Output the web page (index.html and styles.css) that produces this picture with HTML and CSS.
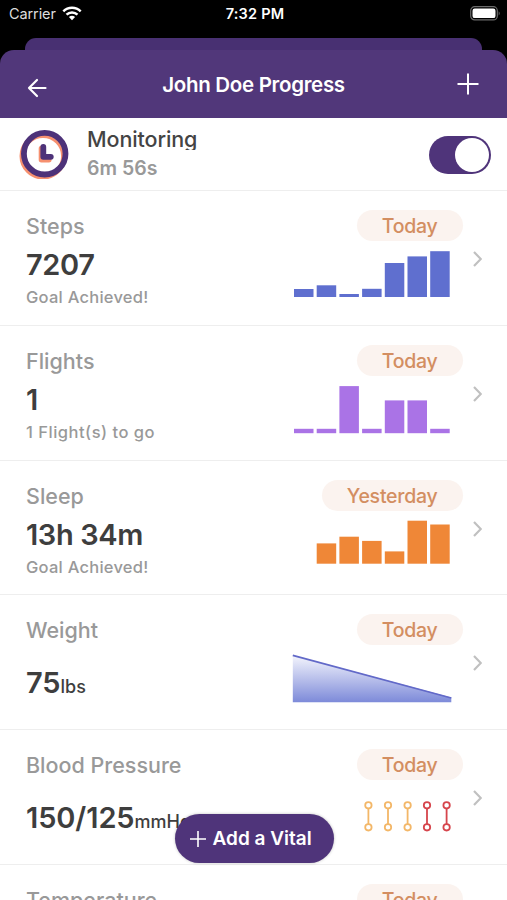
FILE: index.html
```html
<!DOCTYPE html>
<html lang="en">
<head>
    <meta charset="UTF-8">
    <meta name="viewport" content="width=device-width, initial-scale=1.0">
    <title>John Doe Progress</title>
    <link rel="stylesheet" href="styles.css">
</head>
<body>
    <div class="phone">
        <div class="status-bar">
            <div class="carrier">
                <span>Carrier</span>
                <svg width="20" height="15" viewBox="0 0 20 15">
                    <g fill="none" stroke="#fff" stroke-width="2.5">
                        <path d="M1.3 5.3a12.5 12.5 0 0 1 17.4 0"/>
                        <path d="M4.5 8.7a7.9 7.9 0 0 1 11 0"/>
                    </g>
                    <path d="M6.9 11.1a4.5 4.5 0 0 1 6.2 0L10 14.2z" fill="#fff"/>
                </svg>
            </div>
            <div class="clock">7:32 PM</div>
            <svg class="battery" width="31" height="15" viewBox="0 0 31 15">
                <rect x=".7" y=".7" width="26.6" height="13.2" rx="4" fill="none" stroke="#6b6b6b" stroke-width="1.2"/>
                <rect x="2.5" y="2.5" width="23" height="9.6" rx="2.2" fill="#fff"/>
                <path d="M28.7 5.2q2 2 0 4.4z" fill="#6b6b6b"/>
            </svg>
        </div>

        <div class="back-card"></div>

        <header class="header">
            <svg class="back" width="20" height="20" viewBox="0 0 20 20">
                <path d="M18.5 10H2M10 2L2 10l8 8" fill="none" stroke="#fff" stroke-width="2.2" stroke-linecap="round" stroke-linejoin="round"/>
            </svg>
            <h1>John Doe Progress</h1>
            <svg class="plus" width="22" height="22" viewBox="0 0 22 22">
                <path d="M11 .5v21M.5 11h21" stroke="#fff" stroke-width="2"/>
            </svg>
        </header>

        <!-- Monitoring -->
        <div class="monitoring">
            <svg class="timer-icon" width="50" height="50" viewBox="0 0 50 50">
                <g fill="none" stroke="#f6906f" stroke-width="5.4" stroke-linecap="round" stroke-linejoin="round">
                    <circle cx="24" cy="27" r="20.8"/>
                    <path d="M22.4 19.5v11.3h7.5"/>
                </g>
                <g fill="none" stroke="#4d3279" stroke-width="5.8" stroke-linecap="round" stroke-linejoin="round">
                    <circle cx="25.7" cy="24.7" r="20.8"/>
                    <path d="M24.3 18v9.8h7.5"/>
                </g>
            </svg>
            <div class="monitoring-text">
                <div class="monitoring-title">Monitoring</div>
                <div class="monitoring-time">6m 56s</div>
            </div>
            <div class="toggle"><div class="knob"></div></div>
        </div>

        <!-- Vitals -->
        <div class="vital">
            <div class="info">
                <div class="name">Steps</div>
                <div class="value">7207</div>
                <div class="goal">Goal Achieved!</div>
            </div>
            <div class="trend">
                <div class="badge">Today</div>
                <svg class="chart" width="160" height="56" viewBox="0 0 160 56" fill="#5f6fcf">
                    <rect x="2" y="39" width="19.5" height="8"/>
                    <rect x="24.7" y="35.3" width="19.5" height="11.7"/>
                    <rect x="47.4" y="44" width="19.5" height="3"/>
                    <rect x="70.1" y="38.8" width="19.5" height="8.2"/>
                    <rect x="92.8" y="13" width="19.5" height="34"/>
                    <rect x="115.5" y="6.4" width="19.5" height="40.6"/>
                    <rect x="138.2" y="1.2" width="19.5" height="45.8"/>
                </svg>
            </div>
            <svg class="chevron" width="9" height="16" viewBox="0 0 9 16"><path d="M1 1l6.8 7L1 15"/></svg>
        </div>

        <div class="vital">
            <div class="info">
                <div class="name">Flights</div>
                <div class="value">1</div>
                <div class="goal goal-wide">1 Flight(s) to go</div>
            </div>
            <div class="trend">
                <div class="badge">Today</div>
                <svg class="chart" width="160" height="56" viewBox="0 0 160 56" fill="#aa73e6">
                    <rect x="2" y="43.8" width="19.5" height="4.4"/>
                    <rect x="24.7" y="43.8" width="19.5" height="4.4"/>
                    <rect x="47.4" y="1.1" width="19.5" height="47.1"/>
                    <rect x="70.1" y="43.8" width="19.5" height="4.4"/>
                    <rect x="92.8" y="15.4" width="19.5" height="32.8"/>
                    <rect x="115.5" y="15.4" width="19.5" height="32.8"/>
                    <rect x="138.2" y="43.8" width="19.5" height="4.4"/>
                </svg>
            </div>
            <svg class="chevron" width="9" height="16" viewBox="0 0 9 16"><path d="M1 1l6.8 7L1 15"/></svg>
        </div>

        <div class="vital">
            <div class="info">
                <div class="name">Sleep</div>
                <div class="value">13h 34m</div>
                <div class="goal">Goal Achieved!</div>
            </div>
            <div class="trend">
                <div class="badge">Yesterday</div>
                <svg class="chart" width="160" height="56" viewBox="0 0 160 56" fill="#ef8737">
                    <rect x="24.7" y="23.4" width="19.5" height="20.3"/>
                    <rect x="47.4" y="16.7" width="19.5" height="27"/>
                    <rect x="70.1" y="20.9" width="19.5" height="22.8"/>
                    <rect x="92.8" y="31.4" width="19.5" height="12.3"/>
                    <rect x="115.5" y=".7" width="19.5" height="43"/>
                    <rect x="138.2" y="4.5" width="19.5" height="39.2"/>
                </svg>
            </div>
            <svg class="chevron" width="9" height="16" viewBox="0 0 9 16"><path d="M1 1l6.8 7L1 15"/></svg>
        </div>

        <div class="vital">
            <div class="info">
                <div class="name">Weight</div>
                <div class="value value-low">75<span class="unit">lbs</span></div>
            </div>
            <div class="trend">
                <div class="badge">Today</div>
                <svg class="chart" width="160" height="56" viewBox="0 0 160 56">
                    <defs>
                        <linearGradient id="weightFill" x1="0" y1="0" x2="0" y2="1">
                            <stop offset="0" stop-color="#f5f6fd"/>
                            <stop offset="1" stop-color="#7d8ad9"/>
                        </linearGradient>
                    </defs>
                    <path d="M.8 1L159.3 43.5V48.3H.8z" fill="url(#weightFill)"/>
                    <path d="M.8 1.3L159.3 44" stroke="#6269c8" stroke-width="1.8"/>
                </svg>
            </div>
            <svg class="chevron" width="9" height="16" viewBox="0 0 9 16"><path d="M1 1l6.8 7L1 15"/></svg>
        </div>

        <div class="vital">
            <div class="info">
                <div class="name">Blood Pressure</div>
                <div class="value value-low">150/125<span class="unit">mmHg</span></div>
            </div>
            <div class="trend">
                <div class="badge">Today</div>
                <svg class="chart" width="160" height="56" viewBox="0 0 160 56" fill="#fff" stroke-width="1.8">
                    <g stroke="#f3b768">
                        <path d="M76.4 17v22M96 17v22M115.6 17v22"/>
                        <circle cx="76.4" cy="16.3" r="3.2"/><circle cx="76.4" cy="38.3" r="3.2"/>
                        <circle cx="96" cy="16.3" r="3.2"/><circle cx="96" cy="38.3" r="3.2"/>
                        <circle cx="115.6" cy="16.3" r="3.2"/><circle cx="115.6" cy="38.3" r="3.2"/>
                    </g>
                    <g stroke="#d6454c">
                        <path d="M135 17v22M154.6 17v22"/>
                        <circle cx="135" cy="16.3" r="3.2"/><circle cx="135" cy="38.3" r="3.2"/>
                        <circle cx="154.6" cy="16.3" r="3.2"/><circle cx="154.6" cy="38.3" r="3.2"/>
                    </g>
                </svg>
            </div>
            <svg class="chevron" width="9" height="16" viewBox="0 0 9 16"><path d="M1 1l6.8 7L1 15"/></svg>
        </div>

        <div class="vital">
            <div class="info">
                <div class="name">Temperature</div>
            </div>
            <div class="trend">
                <div class="badge">Today</div>
            </div>
            <svg class="chevron" width="9" height="16" viewBox="0 0 9 16"><path d="M1 1l6.8 7L1 15"/></svg>
        </div>

        <button class="add-vital">
            <svg width="16" height="16" viewBox="0 0 16 16"><path d="M8 0v16M0 8h16" stroke="#fff" stroke-width="1.6"/></svg>
            <span>Add a Vital</span>
        </button>
    </div>
</body>
</html>
```
FILE: styles.css
```css
* {
    box-sizing: border-box;
}

body {
    margin: 0;
    background: #000;
    font-family: Inter, "Liberation Sans", sans-serif;
}

.phone {
    position: relative;
    width: 507px;
    height: 900px;
    overflow: hidden;
}

/* Status bar */
.status-bar {
    display: grid;
    grid-template-columns: 1fr auto 1fr;
    align-items: center;
    height: 38px;
    padding: 0 6px 12px 9px;
    color: #fff;
    font-size: 14.5px;
}

.carrier {
    display: flex;
    align-items: center;
    gap: 6px;
    color: #ddd;
    letter-spacing: -0.1px;
}

.clock {
    font-weight: 600;
    letter-spacing: 0.2px;
}

.battery {
    justify-self: end;
}

/* Edge of the card behind the sheet */
.back-card {
    height: 12px;
    margin: 0 25px;
    background: #483072;
    border-radius: 11px 11px 0 0;
}

.header {
    display: flex;
    align-items: center;
    justify-content: space-between;
    height: 68px;
    padding: 0 28px 0 27px;
    background: #51377a;
    border-radius: 14px 14px 0 0;
    color: #fff;
}

.header h1 {
    margin: 0 0 0 3px;
    font-size: 20.5px;
    font-weight: 600;
    letter-spacing: -0.3px;
}

.back {
    margin-top: 8px;
}

/* Monitoring row */
.monitoring {
    display: flex;
    height: 73px;
    padding: 11px 16px 0 19px;
    background: #fff;
    border-bottom: 1px solid #eee;
}

.monitoring-text {
    flex: 1;
    margin-left: 18px;
}

.monitoring-title {
    height: 21px;
    overflow: hidden;
    color: #444;
    font-size: 21.5px;
    font-weight: 500;
    letter-spacing: -0.1px;
    line-height: 21px;
}

.monitoring-time {
    margin-top: 6px;
    color: #999;
    font-size: 19.5px;
    font-weight: 600;
    line-height: 24px;
}

.toggle {
    display: flex;
    justify-content: flex-end;
    width: 62.5px;
    height: 38px;
    margin-top: 7px;
    padding: 2px;
    background: #4f347a;
    border-radius: 19px;
}

.knob {
    width: 34px;
    height: 34px;
    background: #fff;
    border-radius: 50%;
}

/* Vital rows */
.vital {
    display: flex;
    height: 134.8px;
    padding: 19px 25px 0 26px;
    background: #fff;
    border-bottom: 1.5px solid #eee;
}

.info {
    flex: 1;
    white-space: nowrap;
}

.name {
    color: #999;
    font-size: 21.5px;
    font-weight: 500;
    line-height: 32px;
}

.value {
    margin-top: 6px;
    color: #3e3e3e;
    font-size: 29px;
    font-weight: 600;
    letter-spacing: -0.4px;
    line-height: 34px;
}

.value-low {
    margin-top: 20px;
    letter-spacing: -0.1px;
}

.unit {
    font-size: 18px;
    font-weight: 500;
    letter-spacing: 0;
}

.goal {
    margin-top: 5px;
    color: #999;
    font-size: 16.5px;
    font-weight: 500;
    letter-spacing: 0.25px;
    line-height: 20px;
}

.goal-wide {
    letter-spacing: 0.5px;
}

.trend {
    display: flex;
    flex-direction: column;
    align-items: flex-end;
    width: 171px;
    margin-right: 10px;
}

.badge {
    height: 31px;
    padding: 0 25px 0 24.5px;
    background: #fbf3ef;
    border-radius: 16px;
    color: #d38e61;
    font-size: 19.5px;
    font-weight: 500;
    letter-spacing: -0.25px;
    line-height: 32px;
}

.chart {
    margin: 9px 11px 0 0;
}

.chevron {
    margin-top: 41px;
    margin-right: 0.5px;
    fill: none;
    stroke: #c0c0c0;
    stroke-width: 2.2;
}

/* Floating button */
.add-vital {
    position: absolute;
    left: 174.5px;
    bottom: 37px;
    display: flex;
    align-items: center;
    gap: 7px;
    width: 159px;
    height: 49px;
    padding: 0 0 0 15px;
    background: #4f347a;
    border: 0;
    border-radius: 25px;
    box-shadow: 0 0 3px rgba(0, 0, 0, 0.25);
    color: #fff;
    font-family: inherit;
    font-size: 19px;
    font-weight: 600;
    white-space: nowrap;
}
```
